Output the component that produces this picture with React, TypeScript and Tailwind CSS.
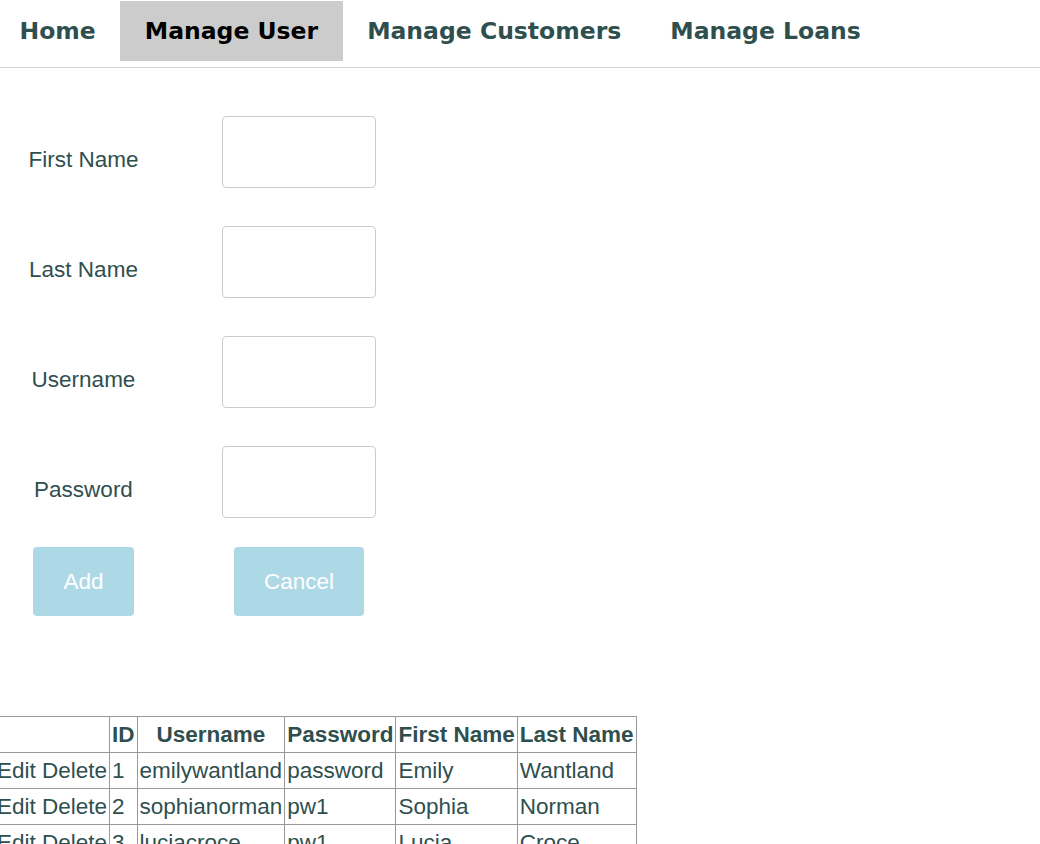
import React, { useState } from 'react';

interface User {
  id: number;
  username: string;
  password: string;
  firstName: string;
  lastName: string;
}

const USERS: User[] = [
  { id: 1, username: 'emilywantland', password: 'password', firstName: 'Emily', lastName: 'Wantland' },
  { id: 2, username: 'sophianorman', password: 'pw1', firstName: 'Sophia', lastName: 'Norman' },
  { id: 3, username: 'luciacroce', password: 'pw1', firstName: 'Lucia', lastName: 'Croce' },
];

const NAV = ['Home', 'Manage User', 'Manage Customers', 'Manage Loans'];
const FIELDS = ['First Name', 'Last Name', 'Username', 'Password'];

const App: React.FC = () => {
  const [active] = useState('Manage User');
  const cell = 'border border-[#999999] px-[2px]';

  return (
    <div className="min-h-screen bg-white text-[#2f4f4f] font-['Liberation_Sans',Arial,sans-serif] overflow-hidden">
      <nav className="flex pt-[1px] pb-[6px] border-b border-[#d3d3d3] ml-[-5px]">
        {NAV.map(item => (
          <div
            key={item}
            className={`h-[60px] pt-[2px] px-[24.5px] flex items-center text-[23.5px] font-bold font-['DejaVu_Sans',Verdana,sans-serif] ${item === active ? 'bg-[#cccccc] text-black' : 'text-[#2f4f4f]'}`}
          >
            {item}
          </div>
        ))}
      </nav>

      <div className="mt-[48px] grid grid-cols-[167px_264px] gap-y-[38px]">
        {FIELDS.map(label => (
          <React.Fragment key={label}>
            <div className="flex items-center justify-center pt-[15px] text-[22.5px]">{label}</div>
            <div className="flex justify-center">
              <input type="text" className="w-[154px] h-[72px] border border-[#cccccc] rounded-[4px] outline-none" />
            </div>
          </React.Fragment>
        ))}
      </div>

      <div className="mt-[29px] grid grid-cols-[167px_264px]">
        <div className="flex justify-center">
          <button className="h-[69px] w-[101px] bg-[#add8e6] text-white text-[22.5px] rounded-[4px]">Add</button>
        </div>
        <div className="flex justify-center">
          <button className="h-[69px] w-[130px] bg-[#add8e6] text-white text-[22.5px] rounded-[4px]">Cancel</button>
        </div>
      </div>

      <table className="mt-[100px] ml-[-6px] border-collapse text-[22.5px] leading-[26px]">
        <thead>
          <tr className="h-[36px]">
            <th className={cell}></th>
            <th className={cell}>ID</th>
            <th className={cell}>Username</th>
            <th className={cell}>Password</th>
            <th className={cell}>First Name</th>
            <th className={cell}>Last Name</th>
          </tr>
        </thead>
        <tbody>
          {USERS.map(u => (
            <tr key={u.id} className="h-[36px]">
              <td className={cell}>Edit Delete</td>
              <td className={cell}>{u.id}</td>
              <td className={cell}>{u.username}</td>
              <td className={cell}>{u.password}</td>
              <td className={cell}>{u.firstName}</td>
              <td className={cell}>{u.lastName}</td>
            </tr>
          ))}
        </tbody>
      </table>
    </div>
  );
};

export default App;
